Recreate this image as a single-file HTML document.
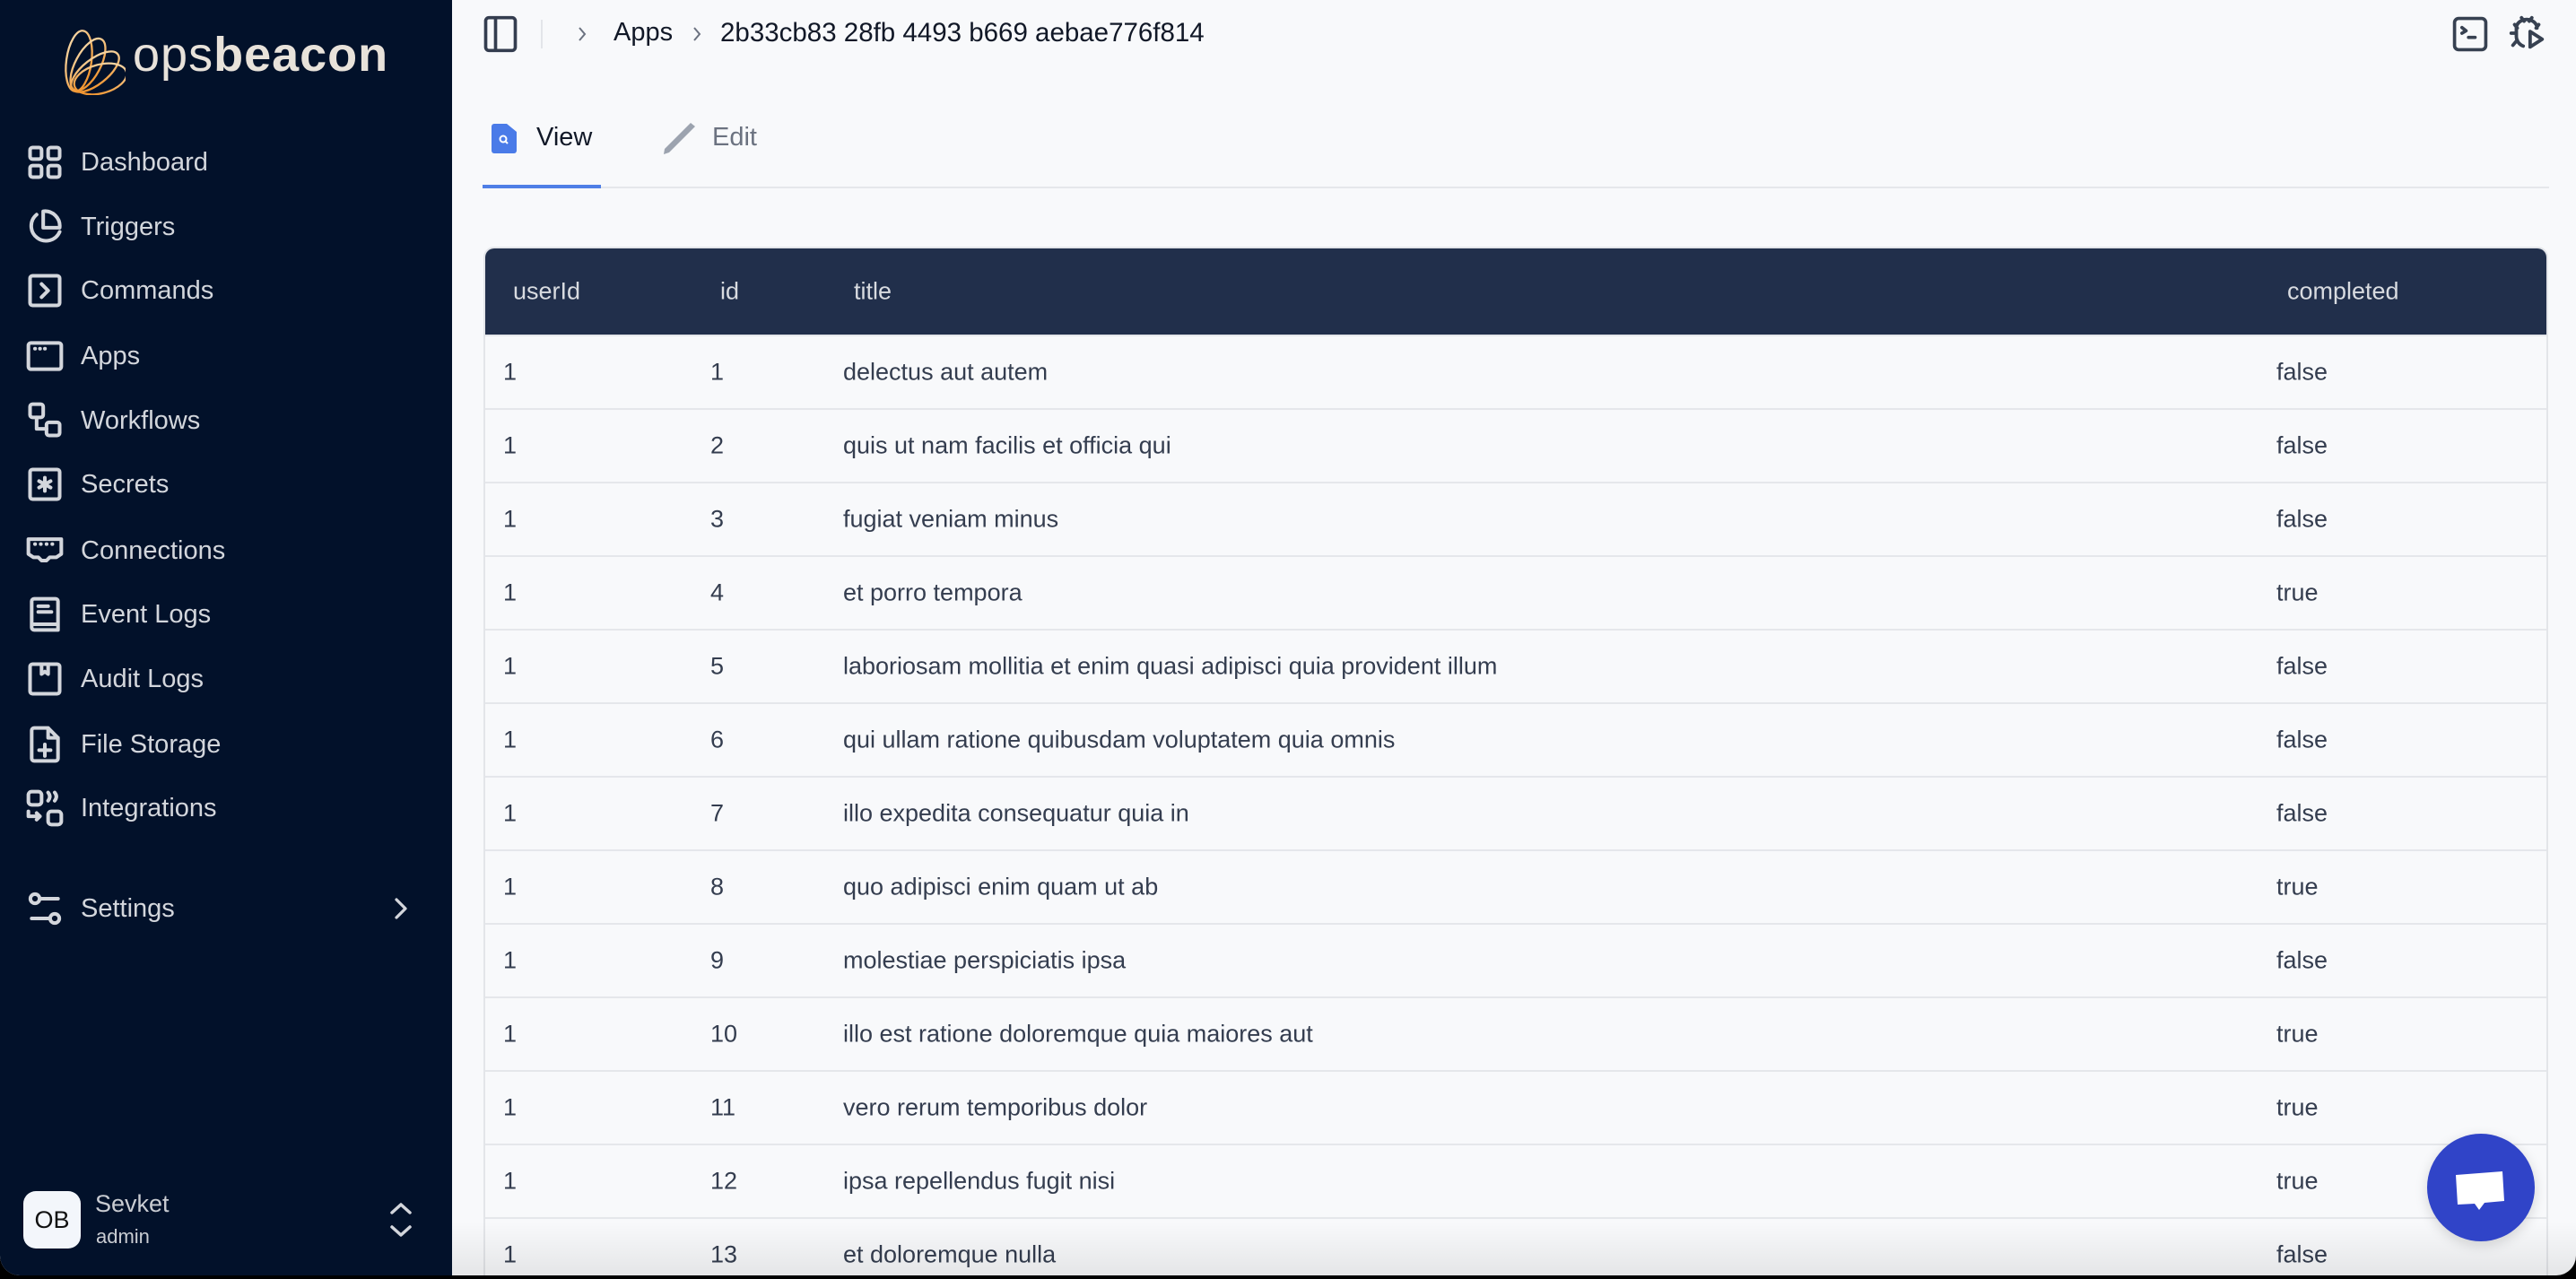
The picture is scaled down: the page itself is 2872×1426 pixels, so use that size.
<!DOCTYPE html>
<html><head><meta charset="utf-8"><style>
*{margin:0;padding:0;box-sizing:border-box}
html,body{width:2872px;height:1426px;overflow:hidden;background:#000;font-family:"Liberation Sans",sans-serif}
.win{position:absolute;left:0;top:0;width:2872px;height:1422px;border-radius:0 0 22px 22px;overflow:hidden;background:#f8f9fb}
.side{position:absolute;left:0;top:0;width:504px;height:1422px;background:#02112a}
.nav{position:absolute;left:0;width:504px;height:60px;display:flex;align-items:center;color:#d3d6dc;font-size:29px}
.nav svg{position:absolute;left:28px;width:44px;height:44px}
.nav span{position:absolute;left:90px}
.ic{fill:none;stroke:#d3d6dc;stroke-width:2.2;stroke-linecap:round;stroke-linejoin:round}
.tbl{position:absolute;left:539px;top:275px;width:2302px;height:1200px;border:2px solid #e3e5e9;border-radius:12px;overflow:hidden}
.hdr{height:96px;background:#212f4b;color:#d8dbe0;font-size:27px;position:relative}
.row{height:82px;border-top:2px solid #e5e7eb;position:relative;color:#343d4f;font-size:27px}
.hdr div,.row div{position:absolute;top:50%;transform:translateY(-50%);white-space:nowrap}
.row div:nth-child(4){left:1997px!important}
</style></head><body>
<div class="win">
<div class="side">
 <svg style="position:absolute;left:62px;top:28px" width="78" height="78" viewBox="0 0 78 78">
  <defs><linearGradient id="g" x1="0" y1="0" x2="1" y2="1"><stop offset="0" stop-color="#f7dfb5"/><stop offset="1" stop-color="#f08a1c"/></linearGradient></defs>
  <g fill="none" stroke="url(#g)" stroke-width="2.3">
   <ellipse cx="26" cy="40" rx="14" ry="34" transform="rotate(8 26 40)"/>
   <ellipse cx="36" cy="44" rx="14" ry="32" transform="rotate(28 36 44)"/>
   <ellipse cx="44" cy="52" rx="14" ry="32" transform="rotate(52 44 52)"/>
   <ellipse cx="50" cy="60" rx="16" ry="30" transform="rotate(75 50 60)"/>
  </g>
 </svg>
 <div style="position:absolute;left:148px;top:30px;font-size:54px;color:#e8e2da;letter-spacing:1px">ops<b style="font-weight:bold">beacon</b></div>

 <div class="nav" style="top:151px"><svg viewBox="0 0 24 24" class="ic"><rect x="3" y="3" width="7" height="7" rx="1.5"/><rect x="14" y="3" width="7" height="7" rx="1.5"/><rect x="3" y="14" width="7" height="7" rx="1.5"/><rect x="14" y="14" width="7" height="7" rx="1.5"/></svg><span>Dashboard</span></div>
 <div class="nav" style="top:223px"><svg viewBox="0 0 24 24" class="ic"><path d="M7 4.5A9 9 0 1 0 21 15"/><path d="M11 2.5a9 9 0 0 1 10 10H11z"/></svg><span>Triggers</span></div>
 <div class="nav" style="top:294px"><svg viewBox="0 0 24 24" class="ic"><rect x="3" y="3" width="18" height="18" rx="1.5"/><path d="M10 8l4 4-4 4"/></svg><span>Commands</span></div>
 <div class="nav" style="top:367px"><svg viewBox="0 0 24 24" class="ic"><rect x="2" y="4" width="20" height="16" rx="1.5"/><path d="M6 7.5h.1M9 7.5h.1M12 7.5h.1"/></svg><span>Apps</span></div>
 <div class="nav" style="top:439px"><svg viewBox="0 0 24 24" class="ic"><rect x="3" y="2" width="8" height="8" rx="1.5"/><rect x="13" y="13" width="8" height="8" rx="1.5"/><path d="M7 10v7h6"/></svg><span>Workflows</span></div>
 <div class="nav" style="top:510px"><svg viewBox="0 0 24 24" class="ic"><rect x="3" y="3" width="18" height="18" rx="1.5"/><path d="M12 8v8M8.5 10l7 4M15.5 10l-7 4"/></svg><span>Secrets</span></div>
 <div class="nav" style="top:584px"><svg viewBox="0 0 24 24" class="ic"><path d="M2 5h20v9l-3 2h-4l-2 2h-3l-2-2H5l-3-2z"/><path d="M6 8h.1M9.5 8h.1M13 8h.1M16.5 8h.1"/></svg><span>Connections</span></div>
 <div class="nav" style="top:655px"><svg viewBox="0 0 24 24" class="ic"><path d="M4 19V4a1.5 1.5 0 0 1 1.5-1.5h13A1.5 1.5 0 0 1 20 4v17.5H5.5A1.5 1.5 0 0 1 4 20zM4 18h16M8 7h6M8 10.5h8"/></svg><span>Event Logs</span></div>
 <div class="nav" style="top:727px"><svg viewBox="0 0 24 24" class="ic"><rect x="3" y="3" width="18" height="18" rx="1.5"/><path d="M10 3v6l2-1.5 2 1.5V3"/></svg><span>Audit Logs</span></div>
 <div class="nav" style="top:800px"><svg viewBox="0 0 24 24" class="ic"><path d="M14 2H5.5A1.5 1.5 0 0 0 4 3.5v17A1.5 1.5 0 0 0 5.5 22h13a1.5 1.5 0 0 0 1.5-1.5V8zM14 2v6h6M12 12v7M8.5 15.5h7"/></svg><span>File Storage</span></div>
 <div class="nav" style="top:871px"><svg viewBox="0 0 24 24" class="ic"><rect x="2" y="2" width="8" height="8" rx="2"/><rect x="14" y="14" width="8" height="8" rx="2"/><path d="M14 2.5q2 2.5 0 5M18 2.5q2 2.5 0 5M2 14v3h7M7 15l2 2-2 2"/></svg><span>Integrations</span></div>
 <div class="nav" style="top:983px"><svg viewBox="0 0 24 24" class="ic"><circle cx="6" cy="6" r="2.8"/><path d="M9 6h11M4 18h11"/><circle cx="18" cy="18" r="2.8"/></svg><span>Settings</span>
  <svg viewBox="0 0 24 24" class="ic" style="left:432px;width:30px;height:30px;stroke-width:2.6"><path d="M8 4l8 8-8 8"/></svg></div>

 <div style="position:absolute;left:26px;top:1328px;width:64px;height:64px;border-radius:14px;background:#f3f6fb;color:#111;font-size:27px;display:flex;align-items:center;justify-content:center">OB</div>
 <div style="position:absolute;left:106px;top:1327px;color:#c9ccd2;font-size:27px">Sevket</div>
 <div style="position:absolute;left:107px;top:1366px;color:#c9ccd2;font-size:22px">admin</div>
 <svg style="position:absolute;left:430px;top:1338px" width="34" height="44" viewBox="0 0 34 44" class="ic"><path d="M7 14l10-9 10 9M7 30l10 9 10-9" stroke-width="3.5"/></svg>
</div>

<!-- top bar -->
<svg style="position:absolute;left:536px;top:16px" width="44" height="44" viewBox="0 0 24 24" fill="none" stroke="#343d4f" stroke-width="2"><rect x="3" y="2" width="18" height="20" rx="2"/><path d="M9 2v20"/></svg>
<div style="position:absolute;left:603px;top:22px;width:2px;height:32px;background:#e3e5e9"></div>
<svg style="position:absolute;left:642px;top:26px" width="14" height="24" viewBox="0 0 14 24" fill="none" stroke="#6b7280" stroke-width="2"><path d="M4 5l6 7-6 7"/></svg>
<div style="position:absolute;left:684px;top:20px;color:#111827;font-size:29px">Apps</div>
<svg style="position:absolute;left:770px;top:26px" width="14" height="24" viewBox="0 0 14 24" fill="none" stroke="#6b7280" stroke-width="2"><path d="M4 5l6 7-6 7"/></svg>
<div style="position:absolute;left:803px;top:20px;color:#111827;font-size:29.5px">2b33cb83 28fb 4493 b669 aebae776f814</div>
<svg style="position:absolute;left:2732px;top:16px" width="44" height="44" viewBox="0 0 24 24" fill="none" stroke="#374151" stroke-width="2" stroke-linecap="round" stroke-linejoin="round"><rect x="2.5" y="2.5" width="19" height="19" rx="2.5"/><path d="M7 8l2.5 2L7 11.5M11 14h4"/></svg>
<svg style="position:absolute;left:2794px;top:14px" width="46" height="46" viewBox="0 0 24 24" fill="none" stroke="#374151" stroke-width="2" stroke-linecap="round" stroke-linejoin="round"><path d="M9 3l1.5 2M15 3l-1.5 2M6 9a6 5 0 0 1 12 0M5 7l1.5 2M19 7l-1.5 2M3 12h3M6 9v5a6 6 0 0 0 4 5.5M4 19l2.5-3M14 11v9l7-4.5z"/></svg>

<!-- tabs -->
<svg style="position:absolute;left:548px;top:138px" width="28" height="33" viewBox="0 0 28 33"><path d="M0 3a3 3 0 0 1 3-3h14l11 9v21a3 3 0 0 1-3 3H3a3 3 0 0 1-3-3z" fill="#4a7be8"/><circle cx="13" cy="17" r="3.5" fill="none" stroke="#fff" stroke-width="2"/><path d="M15.5 19.5l2.5 2.5" stroke="#fff" stroke-width="2"/></svg>
<div style="position:absolute;left:598px;top:137px;font-size:29px;color:#111827">View</div>
<svg style="position:absolute;left:740px;top:136px" width="36" height="36" viewBox="0 0 36 36"><path d="M30 1l5 4L6 34l-6 2 1-6z" fill="#9ca3af"/></svg>
<div style="position:absolute;left:794px;top:137px;font-size:29px;color:#6b7280">Edit</div>
<div style="position:absolute;left:538px;top:208px;width:2304px;height:2px;background:#e5e7eb"></div>
<div style="position:absolute;left:538px;top:206px;width:132px;height:4px;background:#4f7fe6"></div>

<div class="tbl">
 <div class="hdr"><div style="left:31px">userId</div><div style="left:262px">id</div><div style="left:411px">title</div><div style="left:2009px">completed</div></div>
 <div class="row"><div style="left:20px">1</div><div style="left:251px">1</div><div style="left:399px">delectus aut autem</div><div>false</div></div>
 <div class="row"><div style="left:20px">1</div><div style="left:251px">2</div><div style="left:399px">quis ut nam facilis et officia qui</div><div>false</div></div>
 <div class="row"><div style="left:20px">1</div><div style="left:251px">3</div><div style="left:399px">fugiat veniam minus</div><div>false</div></div>
 <div class="row"><div style="left:20px">1</div><div style="left:251px">4</div><div style="left:399px">et porro tempora</div><div>true</div></div>
 <div class="row"><div style="left:20px">1</div><div style="left:251px">5</div><div style="left:399px">laboriosam mollitia et enim quasi adipisci quia provident illum</div><div>false</div></div>
 <div class="row"><div style="left:20px">1</div><div style="left:251px">6</div><div style="left:399px">qui ullam ratione quibusdam voluptatem quia omnis</div><div>false</div></div>
 <div class="row"><div style="left:20px">1</div><div style="left:251px">7</div><div style="left:399px">illo expedita consequatur quia in</div><div>false</div></div>
 <div class="row"><div style="left:20px">1</div><div style="left:251px">8</div><div style="left:399px">quo adipisci enim quam ut ab</div><div>true</div></div>
 <div class="row"><div style="left:20px">1</div><div style="left:251px">9</div><div style="left:399px">molestiae perspiciatis ipsa</div><div>false</div></div>
 <div class="row"><div style="left:20px">1</div><div style="left:251px">10</div><div style="left:399px">illo est ratione doloremque quia maiores aut</div><div>true</div></div>
 <div class="row"><div style="left:20px">1</div><div style="left:251px">11</div><div style="left:399px">vero rerum temporibus dolor</div><div>true</div></div>
 <div class="row"><div style="left:20px">1</div><div style="left:251px">12</div><div style="left:399px">ipsa repellendus fugit nisi</div><div>true</div></div>
 <div class="row"><div style="left:20px">1</div><div style="left:251px">13</div><div style="left:399px">et doloremque nulla</div><div>false</div></div>
</div>
<div style="position:absolute;left:504px;right:0;bottom:0;height:60px;background:linear-gradient(rgba(0,0,0,0),rgba(0,0,0,0.08))"></div>

<div style="position:absolute;left:2706px;top:1264px;width:120px;height:120px;border-radius:50%;background:#3044c8;box-shadow:0 4px 14px rgba(0,0,0,0.15)">
 <svg style="position:absolute;left:30px;top:36px" width="60" height="50" viewBox="0 0 60 50"><path d="M2 10l52-4 2 33-22 2-6 8-5-7-19 1z" fill="#fff"/></svg>
</div>
</div>
</body></html>
